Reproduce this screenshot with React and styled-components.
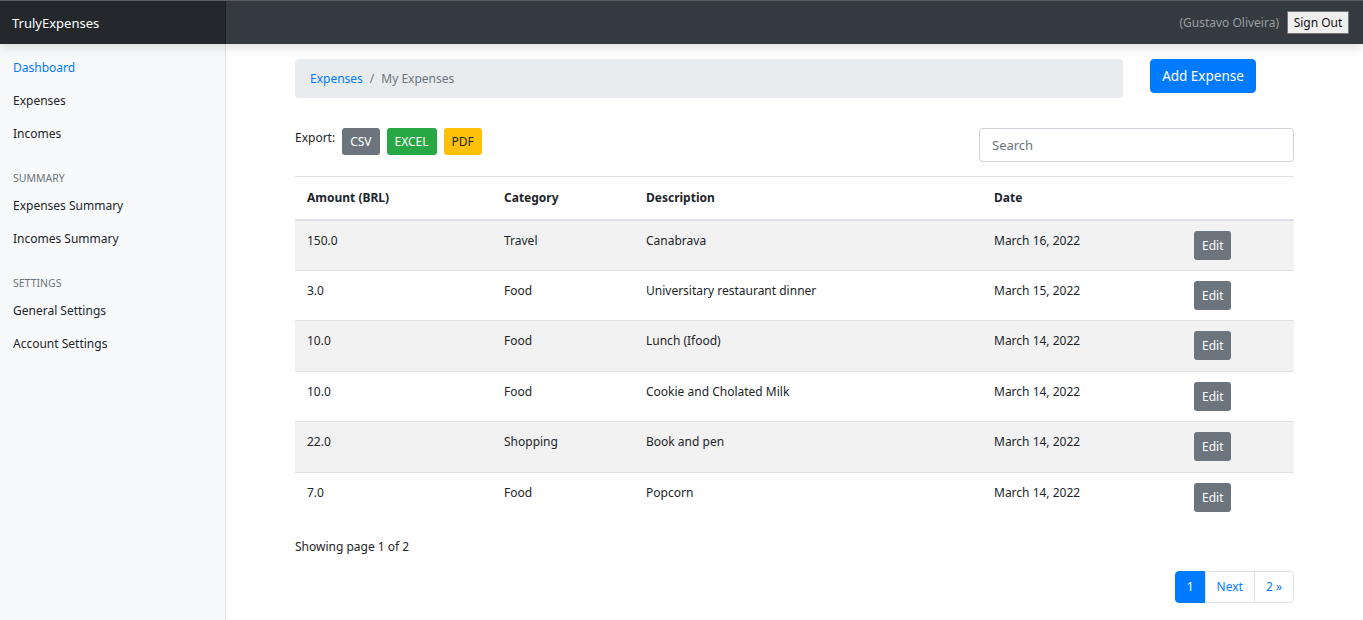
import React from "react";
import styled, { createGlobalStyle } from "styled-components";

const Global = createGlobalStyle`
  * { box-sizing: border-box; }
  html, body { margin: 0; padding: 0; }
  body {
    font-family: "Noto Sans", "Open Sans", Arial, sans-serif;
    font-size: 12px;
    color: #212529;
    background: #fff;
  }
`;

const Page = styled.div`
  display: flex;
  flex-direction: column;
  min-height: 620px;
`;

const Navbar = styled.header`
  height: 44px;
  display: flex;
  align-items: stretch;
  background: #343a40;
  border-top: 1px solid #5b5f63;
  box-shadow: 0 4px 10px rgba(0, 0, 0, 0.12);
  position: relative;
  z-index: 2;
`;

const Brand = styled.div`
  width: 226px;
  background: #24272b;
  color: #fff;
  font-size: 13px;
  display: flex;
  align-items: center;
  padding-left: 12px;
  box-shadow: inset -1px 0 0 rgba(0, 0, 0, 0.25);
`;

const NavRight = styled.div`
  flex: 1;
  display: flex;
  justify-content: flex-end;
  align-items: center;
  gap: 8px;
  padding-right: 14px;
`;

const UserName = styled.span`
  color: #9a9da1;
  font-size: 12px;
`;

const SignOut = styled.button`
  font-family: inherit;
  font-size: 12px;
  background: #efefef;
  color: #111;
  border: 1px solid #767676;
  border-radius: 0;
  padding: 0 5px;
  height: 23px;
  width: 62px;
  cursor: pointer;
`;

const Body = styled.div`
  flex: 1;
  display: flex;
`;

const Sidebar = styled.nav`
  width: 226px;
  background: #f8f9fa;
  border-right: 1px solid #e3e4e6;
  padding-top: 10px;
  display: flex;
  flex-direction: column;
`;

const SideLink = styled.a`
  display: block;
  padding: 0 13px;
  height: 33px;
  line-height: 28px;
  font-size: 12px;
  color: ${(p) => (p.$active ? "#007bff" : "#212529")};
  text-decoration: none;
`;

const SideHeading = styled.div`
  padding: 0 13px;
  margin-top: 15px;
  height: 24px;
  line-height: 20px;
  font-size: 10.5px;
  color: #6c757d;
  text-transform: uppercase;
`;

const Main = styled.main`
  flex: 1;
  padding: 15px 69px 16px 69px;
  display: flex;
  flex-direction: column;
`;

const TopRow = styled.div`
  display: flex;
  align-items: flex-start;
  gap: 27px;
`;

const Breadcrumb = styled.ol`
  flex: 0 0 828px;
  margin: 0;
  list-style: none;
  height: 39px;
  background: #e9ecef;
  border-radius: 4px;
  padding: 0 15px;
  display: flex;
  align-items: center;
  font-size: 12px;
`;

const Crumb = styled.li`
  color: ${(p) => (p.$link ? "#007bff" : "#6c757d")};
  &:not(:first-child)::before {
    content: "/";
    color: #6c757d;
    padding: 0 7px;
  }
`;

const PrimaryButton = styled.button`
  font-family: inherit;
  font-size: 13.5px;
  color: #fff;
  background: #007bff;
  border: 1px solid #007bff;
  border-radius: 4px;
  height: 34px;
  width: 106px;
  padding: 0;
`;

const ToolRow = styled.div`
  margin-top: 30px;
  display: flex;
  justify-content: space-between;
  align-items: flex-start;
`;

const ExportGroup = styled.div`
  display: flex;
  align-items: flex-start;
  gap: 7px;
`;

const ExportLabel = styled.span`
  font-size: 12px;
  margin-top: 1px;
`;

const COLORS = {
  secondary: ["#6c757d", "#fff"],
  success: ["#28a745", "#fff"],
  warning: ["#ffc107", "#212529"],
};

const SmallButton = styled.button`
  font-family: inherit;
  font-size: 12px;
  height: 27px;
  padding: 0 8px;
  border: none;
  border-radius: 3px;
  background: ${(p) => COLORS[p.$variant][0]};
  color: ${(p) => COLORS[p.$variant][1]};
`;

const SearchInput = styled.input`
  font-family: inherit;
  font-size: 13px;
  width: 315px;
  height: 34px;
  padding: 0 12px;
  border: 1px solid #ced4da;
  border-radius: 4px;
  color: #495057;
  &::placeholder { color: #6c757d; }
`;

const Table = styled.table`
  margin-top: 14px;
  width: 100%;
  border-collapse: collapse;
  font-size: 12px;
`;

const Th = styled.th`
  text-align: left;
  font-weight: 700;
  height: 43px;
  padding: 0 12px;
  border-top: 1px solid #dee2e6;
  border-bottom: 2px solid #dee2e6;
  vertical-align: middle;
  width: ${(p) => p.$w || "auto"};
`;

const Tr = styled.tr`
  background: ${(p) => (p.$striped ? "#f2f2f2" : "#fff")};
  height: 50.5px;
  &:not(:first-child) td { border-top: 1px solid #dee2e6; }
`;

const Td = styled.td`
  padding: 10px 12px 0;
  vertical-align: top;
  line-height: 20px;
`;

const EditButton = styled(SmallButton)`
  margin-top: 0;
  height: 29px;
  font-size: 12px;
  padding: 0 8px;
`;

const PageInfo = styled.div`
  margin-top: 14px;
  line-height: 20px;
  font-size: 12px;
`;

const Pagination = styled.ul`
  list-style: none;
  margin: 14px 0 0;
  padding: 0;
  align-self: flex-end;
  display: flex;
`;

const PageItem = styled.li`
  height: 32px;
  padding: 0 11px;
  display: flex;
  align-items: center;
  font-size: 12px;
  color: ${(p) => (p.$active ? "#fff" : "#007bff")};
  background: ${(p) => (p.$active ? "#007bff" : "#fff")};
  border: 1px solid ${(p) => (p.$active ? "#007bff" : "#dee2e6")};
  margin-left: -1px;
  &:first-child { border-radius: 4px 0 0 4px; margin-left: 0; }
  &:last-child { border-radius: 0 4px 4px 0; }
`;

const rows = [
  ["150.0", "Travel", "Canabrava", "March 16, 2022"],
  ["3.0", "Food", "Universitary restaurant dinner", "March 15, 2022"],
  ["10.0", "Food", "Lunch (Ifood)", "March 14, 2022"],
  ["10.0", "Food", "Cookie and Cholated Milk", "March 14, 2022"],
  ["22.0", "Shopping", "Book and pen", "March 14, 2022"],
  ["7.0", "Food", "Popcorn", "March 14, 2022"],
];

export default function App() {
  return (
    <Page>
      <Global />
      <Navbar>
        <Brand>TrulyExpenses</Brand>
        <NavRight>
          <UserName>(Gustavo Oliveira)</UserName>
          <SignOut>Sign Out</SignOut>
        </NavRight>
      </Navbar>
      <Body>
        <Sidebar>
          <SideLink $active>Dashboard</SideLink>
          <SideLink>Expenses</SideLink>
          <SideLink>Incomes</SideLink>
          <SideHeading>Summary</SideHeading>
          <SideLink>Expenses Summary</SideLink>
          <SideLink>Incomes Summary</SideLink>
          <SideHeading>Settings</SideHeading>
          <SideLink>General Settings</SideLink>
          <SideLink>Account Settings</SideLink>
        </Sidebar>
        <Main>
          <TopRow>
            <Breadcrumb>
              <Crumb $link>Expenses</Crumb>
              <Crumb>My Expenses</Crumb>
            </Breadcrumb>
            <PrimaryButton>Add Expense</PrimaryButton>
          </TopRow>
          <ToolRow>
            <ExportGroup>
              <ExportLabel>Export:</ExportLabel>
              <SmallButton $variant="secondary">CSV</SmallButton>
              <SmallButton $variant="success">EXCEL</SmallButton>
              <SmallButton $variant="warning">PDF</SmallButton>
            </ExportGroup>
            <SearchInput placeholder="Search" />
          </ToolRow>
          <Table>
            <thead>
              <tr>
                <Th $w="197px">Amount (BRL)</Th>
                <Th $w="142px">Category</Th>
                <Th $w="348px">Description</Th>
                <Th $w="200px">Date</Th>
                <Th></Th>
              </tr>
            </thead>
            <tbody>
              {rows.map((r, i) => (
                <Tr key={i} $striped={i % 2 === 0}>
                  <Td>{r[0]}</Td>
                  <Td>{r[1]}</Td>
                  <Td>{r[2]}</Td>
                  <Td>{r[3]}</Td>
                  <Td>
                    <EditButton $variant="secondary">Edit</EditButton>
                  </Td>
                </Tr>
              ))}
            </tbody>
          </Table>
          <PageInfo>Showing page 1 of 2</PageInfo>
          <Pagination>
            <PageItem $active>1</PageItem>
            <PageItem>Next</PageItem>
            <PageItem>2 »</PageItem>
          </Pagination>
        </Main>
      </Body>
    </Page>
  );
}
